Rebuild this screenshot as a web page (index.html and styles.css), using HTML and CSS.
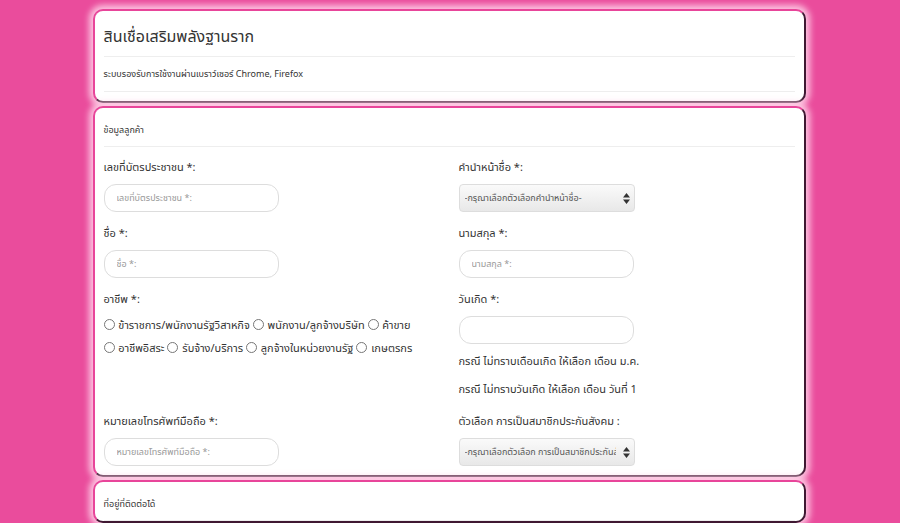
FILE: index.html
```html
<!DOCTYPE html>
<html lang="th">
<head>
  <meta charset="UTF-8" />
  <meta name="viewport" content="width=device-width, initial-scale=1.0"/>
  <title>สินเชื่อเสริมพลังฐานราก</title>
  <link rel="stylesheet" href="styles.css">
</head>
<body>

  <div class="panel panel-head">
    <h3 class="title">สินเชื่อเสริมพลังฐานราก</h3>
    <hr>
    <p class="note">ระบบรองรับการใช้งานผ่านเบราว์เซอร์ Chrome, Firefox</p>
    <hr>
  </div>

  <div class="panel">
    <p class="section">ข้อมูลลูกค้า</p>
    <hr>

    <div class="form-grid">
      <div class="form-group">
        <label>เลขที่บัตรประชาชน *:</label>
        <input type="text" class="field" placeholder="เลขที่บัตรประชาชน *:">
      </div>
      <div class="form-group">
        <label>คำนำหน้าชื่อ *:</label>
        <div class="select-box">
          <select class="select">
            <option>-กรุณาเลือกตัวเลือกคำนำหน้าชื่อ-</option>
          </select>
          <svg class="arrows" width="7" height="11" viewBox="0 0 7 11"><path d="M3.5 0 L7 4.5 H0 Z M3.5 11 L7 6.5 H0 Z" fill="#333"/></svg>
        </div>
      </div>

      <div class="form-group">
        <label>ชื่อ *:</label>
        <input type="text" class="field" placeholder="ชื่อ *:">
      </div>
      <div class="form-group">
        <label>นามสกุล *:</label>
        <input type="text" class="field" placeholder="นามสกุล *:">
      </div>

      <div class="form-group">
        <label>อาชีพ *:</label>
        <div class="radios">
          <span class="radio-item"><input type="radio" name="job"> ข้าราชการ/พนักงานรัฐวิสาหกิจ</span>
          <span class="radio-item"><input type="radio" name="job"> พนักงาน/ลูกจ้างบริษัท</span>
          <span class="radio-item"><input type="radio" name="job"> ค้าขาย</span>
          <span class="radio-item"><input type="radio" name="job"> อาชีพอิสระ</span>
          <span class="radio-item"><input type="radio" name="job"> รับจ้าง/บริการ</span>
          <span class="radio-item"><input type="radio" name="job"> ลูกจ้างในหน่วยงานรัฐ</span>
          <span class="radio-item"><input type="radio" name="job"> เกษตรกร</span>
        </div>
      </div>
      <div class="form-group">
        <label>วันเกิด *:</label>
        <input type="text" class="field">
        <p class="hint">กรณี ไม่ทราบเดือนเกิด ให้เลือก เดือน ม.ค.</p>
        <p class="hint">กรณี ไม่ทราบวันเกิด ให้เลือก เดือน วันที่ 1</p>
      </div>

      <div class="form-group last">
        <label>หมายเลขโทรศัพท์มือถือ *:</label>
        <input type="text" class="field" placeholder="หมายเลขโทรศัพท์มือถือ *:">
      </div>
      <div class="form-group last">
        <label>ตัวเลือก การเป็นสมาชิกประกันสังคม :</label>
        <div class="select-box">
          <select class="select">
            <option>-กรุณาเลือกตัวเลือก การเป็นสมาชิกประกันสังคม-</option>
          </select>
          <svg class="arrows" width="7" height="11" viewBox="0 0 7 11"><path d="M3.5 0 L7 4.5 H0 Z M3.5 11 L7 6.5 H0 Z" fill="#333"/></svg>
        </div>
      </div>
    </div>
  </div>

  <div class="panel">
    <p class="section">ที่อยู่ที่ติดต่อได้</p>
    <hr>
  </div>

</body>
</html>
```

FILE: styles.css
```css
body {
  font-family: Tahoma, "Noto Sans Thai", "Noto Sans", sans-serif;
  background-color: #ea4c9c;
  margin: 0;
  padding-top: 9px;
  color: #333;
  overflow: hidden;
}

.panel {
  width: 691px;
  margin: 0 auto 3px;
  padding: 0 9px;
  background: #fff;
  border: 2px solid;
  border-color: #e8459a #3f1832 #3f1832 #e8459a;
  border-radius: 10px;
  box-shadow: 0 0 6px 4px rgba(255, 215, 235, 0.85);
  position: relative;
  left: -1px;
}

.panel-head {
  padding-bottom: 9px;
}

hr {
  border: none;
  border-top: 1px solid #eee;
  margin: 0;
}

.title {
  font-size: 16px;
  font-weight: normal;
  margin: 0;
  padding: 16px 0 9px;
  line-height: 20px;
}

.note {
  font-size: 9px;
  margin: 0;
  padding: 11px 0 11px;
  line-height: 12px;
}

.section {
  font-size: 9px;
  margin: 0;
  padding: 17px 0 10px;
  line-height: 11px;
}

.form-grid {
  display: grid;
  grid-template-columns: 337px 1fr;
  column-gap: 18px;
  padding-top: 11px;
}

.form-group {
  margin-bottom: 12px;
}

.form-group.last {
  margin-bottom: 9px;
}

.form-group label {
  display: block;
  font-size: 11px;
  line-height: 20px;
  margin-bottom: 6px;
}

.field {
  display: block;
  width: 175px;
  height: 28px;
  box-sizing: border-box;
  border: 1px solid #ddd;
  border-radius: 12px;
  padding: 0 12px;
  font-family: inherit;
  font-size: 9px;
}

.field::placeholder {
  color: #999;
}

.select-box {
  position: relative;
  width: 176px;
}

.select {
  display: block;
  width: 100%;
  height: 28px;
  appearance: none;
  -webkit-appearance: none;
  border: 1px solid #ddd;
  border-radius: 4px;
  background: linear-gradient(#fafafa, #e8e8e8);
  padding: 0 18px 0 5px;
  font-family: inherit;
  font-size: 9px;
  color: #555;
}

.arrows {
  position: absolute;
  right: 5px;
  top: 9px;
}

.radios {
  font-size: 11px;
  line-height: 23px;
  margin-top: -2px;
}

.radio-item {
  white-space: nowrap;
}

.radio-item input {
  width: 11px;
  height: 11px;
  margin: 0 1px 0 0;
  vertical-align: -1px;
}

.hint {
  font-size: 11px;
  margin: 8px 0 0;
  line-height: 20px;
}

.hint + .hint {
  margin-top: 8px;
}
```
